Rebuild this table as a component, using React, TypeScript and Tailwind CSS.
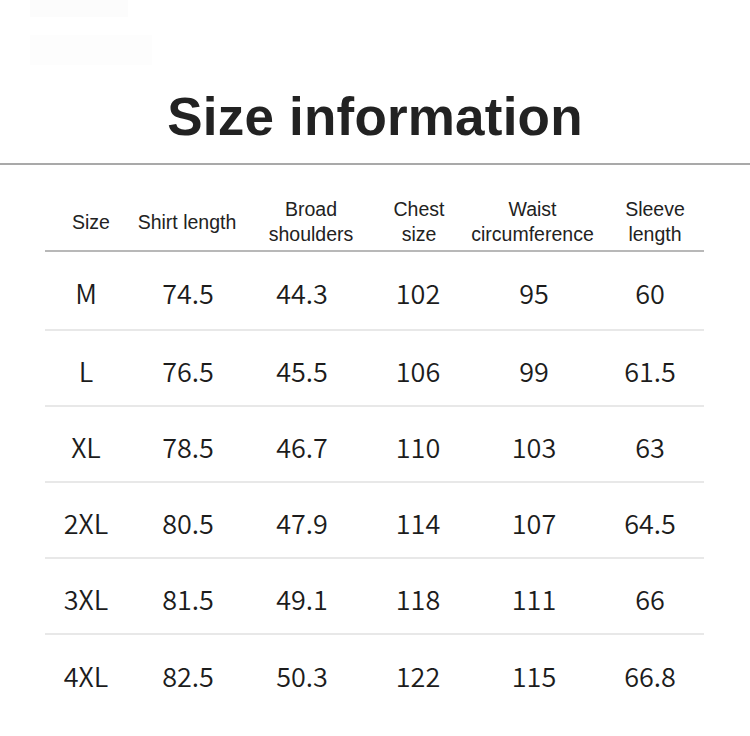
import React from 'react';

const headers: string[][] = [
  ['Size'],
  ['Shirt length'],
  ['Broad', 'shoulders'],
  ['Chest', 'size'],
  ['Waist', 'circumference'],
  ['Sleeve', 'length'],
];

const rows: string[][] = [
  ['M', '74.5', '44.3', '102', '95', '60'],
  ['L', '76.5', '45.5', '106', '99', '61.5'],
  ['XL', '78.5', '46.7', '110', '103', '63'],
  ['2XL', '80.5', '47.9', '114', '107', '64.5'],
  ['3XL', '81.5', '49.1', '118', '111', '66'],
  ['4XL', '82.5', '50.3', '122', '115', '66.8'],
];

const App: React.FC = () => {
  return (
    <div className="w-[750px] h-[736px] bg-white text-[#222] overflow-hidden">
      {/* title block */}
      <div className="h-[163px] flex flex-col">
        <div className="ml-[30px] w-[98px] h-[17px] bg-[#fcfcfc]" />
        <div className="ml-[30px] mt-[18px] w-[122px] h-[30px] bg-[#fdfdfd]" />
        <h1 className="mt-[25px] text-center text-[53px] leading-none font-bold font-['Liberation_Sans',Arial,sans-serif] tracking-[0.2px]">
          Size information
        </h1>
      </div>
      <div className="h-[2px] w-full bg-[#a9a9a9]" />

      <div className="ml-[45px] w-[659px]">
        {/* header */}
        <div className="h-[87px] pt-[29px] grid grid-cols-[92px_100px_148px_68px_159px_86px] items-center border-b-2 border-[#b8b8b8] font-['Liberation_Sans',Arial,sans-serif] text-[19.5px] leading-[25px]">
          {headers.map((h, i) => (
            <div key={i} className="text-center whitespace-nowrap">
              {h.map((line) => (
                <div key={line}>{line}</div>
              ))}
            </div>
          ))}
        </div>

        {/* body */}
        {rows.map((r, i) => (
          <div
            key={r[0]}
            className={
              'grid grid-cols-[82px_122px_106px_126px_106px_126px] items-center pt-[4px] text-[27px] leading-none font-[350] text-[#1c1c1c] font-["Noto_Sans_CJK_JP","Noto_Sans",sans-serif] ' +
              (i === 0 ? 'h-[79px] ' : 'h-[76px] ') +
              (i < rows.length - 1 ? 'border-b-2 border-[#e8e8e8]' : '')
            }
          >
            {r.map((c, j) => (
              <div key={j} className="text-center">
                {c}
              </div>
            ))}
          </div>
        ))}
      </div>
    </div>
  );
};

export default App;
